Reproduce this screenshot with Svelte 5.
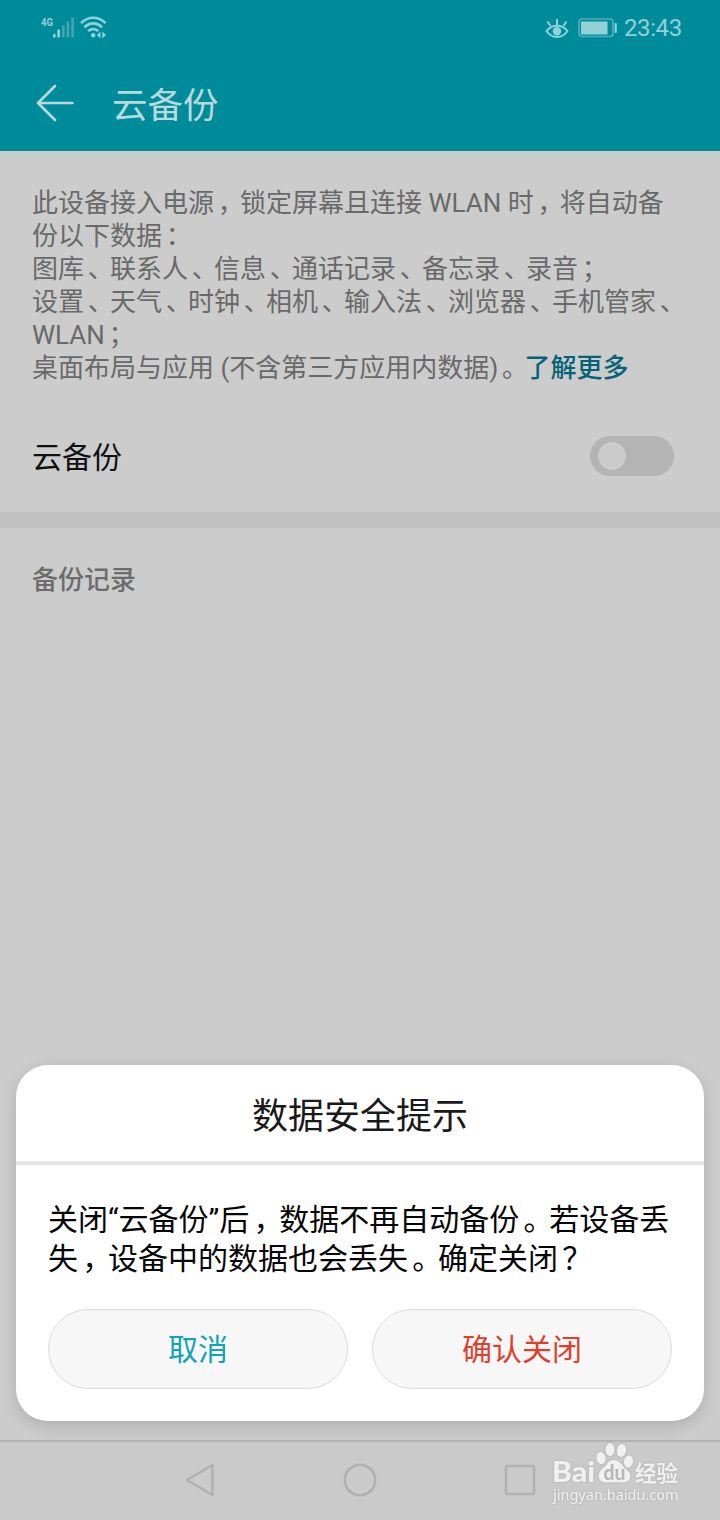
<script>
  const lines = [
    '此设备接入电源，锁定屏幕且连接 WLAN 时，将自动备',
    '份以下数据：',
    '图库、联系人、信息、通话记录、备忘录、录音；',
    '设置、天气、时钟、相机、输入法、浏览器、手机管家、',
    'WLAN；'
  ];
  const message = ['关闭“云备份”后，数据不再自动备份。若设备丢', '失，设备中的数据也会丢失。确定关闭？'];
  const parts = (text) => text.split(/([，。、；：？])/).filter(Boolean);
  const isMark = (part) => '，。、；：？'.includes(part);
  let enabled = $state(false);
</script>

{#snippet prose(text)}{#each parts(text) as part}{#if isMark(part)}<span class="punct">{part}</span>{:else}{part}{/if}{/each}{/snippet}

<div class="screen">
  <header>
    <div class="status">
      <svg class="signal" width="68" height="26" viewBox="0 0 68 26">
        <text x="1" y="11" font-size="11.500" font-weight="700" textLength="12" lengthAdjust="spacingAndGlyphs" fill="#8fd3db">4G</text>
        <g fill="#8fd3db">
          <rect x="13" y="19" width="2.6" height="3.5" />
          <rect x="17.3" y="14.5" width="2.6" height="8" />
        </g>
        <g fill="#43a7b3">
          <rect x="22" y="10.5" width="2.6" height="12" />
          <rect x="26.6" y="6.5" width="2.6" height="16" />
          <rect x="31.3" y="2.5" width="2.6" height="20" />
        </g>
        <g fill="none" stroke="#8fd3db" stroke-width="2.6">
          <path d="M41 8.2C48 1 58.500 1 65.500 8.200" />
          <path d="M44.500 12.300C49.500 7 57 7 62 12.300" />
          <path d="M48.200 16.200C51 13.300 55.500 13.300 58.300 16.200" />
        </g>
        <circle cx="53.2" cy="20.200" r="2.200" fill="#8fd3db" />
        <path d="M60.500 16.500v7L56.800 20zM62.300 16.500v7L66 20z" fill="#8fd3db" />
      </svg>
      <div class="right">
        <svg width="24" height="24" viewBox="0 0 24 24" fill="none" stroke="#8fd3db" stroke-width="2">
          <path d="M1.500 15C7 8 17 8 22.500 15C17 23 7 23 1.500 15Z" />
          <circle cx="12" cy="15.300" r="4.200" fill="#8fd3db" stroke="none" />
          <path d="M12 9V3M5.500 10L2.500 5.500M18.500 10L21.500 5.500" />
        </svg>
        <svg width="40" height="20" viewBox="0 0 40 20">
          <rect x="1" y="1" width="34" height="17.500" rx="3" fill="none" stroke="#4eafb9" stroke-width="1.700" />
          <rect x="3" y="3.500" width="26.500" height="13" fill="#93d0d7" />
          <rect x="36.600" y="5" width="2.200" height="10" rx="1" fill="#8fd3db" />
        </svg>
        <span class="time">23:43</span>
      </div>
    </div>
    <div class="bar">
      <svg width="38" height="38" viewBox="0 0 38 38" fill="none" stroke="#b8dadd" stroke-width="2.600" stroke-linecap="round" stroke-linejoin="round">
        <path d="M36.500 19H2M19 2L2 19L19 36" />
      </svg>
      <h1>云备份</h1>
    </div>
  </header>

  <main>
    <section class="intro">
      {#each lines as line}
        <div>{@render prose(line)}</div>
      {/each}
      <div>{@render prose('桌面布局与应用 (不含第三方应用内数据)。')}<b>了解更多</b></div>
    </section>
    <section class="setting">
      <span>云备份</span>
      <button class="toggle" class:on={enabled} aria-label="云备份" onclick={() => (enabled = !enabled)}><i></i></button>
    </section>
    <div class="band"></div>
    <h2>备份记录</h2>
  </main>

  <div class="dialog">
    <h3>数据安全提示</h3>
    <div class="message">
      {#each message as line}
        <div>{@render prose(line)}</div>
      {/each}
    </div>
    <div class="actions">
      <button class="cancel">取消</button>
      <button class="confirm">确认关闭</button>
    </div>
  </div>

  <nav>
    <svg width="32" height="36" viewBox="0 0 32 36"><path d="M3 18L28.500 3V33Z" /></svg>
    <svg width="36" height="36" viewBox="0 0 36 36"><circle cx="18" cy="18" r="15.200" /></svg>
    <svg width="32" height="36" viewBox="0 0 32 36"><rect x="2" y="4" width="28" height="28" rx="1.500" /></svg>
  </nav>

  <div class="mark">
    <svg width="140" height="56" viewBox="0 0 140 56">
      <g fill="#f1f1f1">
        <text class="brand" x="1" y="41" font-size="29" font-weight="900" textLength="43" lengthAdjust="spacingAndGlyphs">Bai</text>
        <ellipse cx="50" cy="17" rx="4.500" ry="6" transform="rotate(-10 50 17)" />
        <ellipse cx="59" cy="8.500" rx="4.500" ry="6.500" />
        <ellipse cx="70.500" cy="9.500" rx="4.500" ry="6.500" transform="rotate(12 70.500 9.500)" />
        <ellipse cx="77.500" cy="20.500" rx="4.500" ry="6" transform="rotate(10 77.500 20.500)" />
        <path d="M63 19C57 19 56 24 51 28C45 33 47 42 56 41.500C61 41 66 41 70 41.500C80 43 82 34 76 29C71 25 69 19 63 19Z" />
        <text class="cjk" x="84" y="39.500" font-size="22" font-weight="700" textLength="43" lengthAdjust="spacingAndGlyphs">经验</text>
      </g>
      <text class="brand" x="52.500" y="39" font-size="20" font-weight="900" textLength="22" lengthAdjust="spacingAndGlyphs" fill="#b8b8b8">du</text>
    </svg>
    <div class="url">jingyan.baidu.com</div>
  </div>
</div>

<style>
  :global(body) { margin: 0; }
  .screen {
    position: relative;
    box-sizing: border-box;
    width: 720px;
    height: 1520px;
    display: flex;
    flex-direction: column;
    overflow: hidden;
    background: #ccc;
    font-family: Roboto, "Noto Sans CJK SC", sans-serif;
  }
  header { height: 151px; background: #008b9b; }
  .status {
    height: 56px;
    display: flex;
    align-items: center;
    justify-content: space-between;
    padding: 0 38px 0 40px;
  }
  .right { display: flex; align-items: center; }
  .right svg:nth-child(2) { margin-left: 9px; }
  .time { margin-left: 6px; font-size: 24px; line-height: 56px; color: #93d0d7; width: 58px; white-space: nowrap; letter-spacing: -.4px; }
  .bar { height: 95px; display: flex; align-items: center; padding-left: 36px; }
  h1 { margin: 4px 0 0 38px; font-size: 35.500px; font-weight: 400; line-height: 48px; color: #b8dadd; }
  .bar svg { margin-top: -1px; }
  .punct { display: inline-block; width: 1em; text-indent: .14em; letter-spacing: -.15em; }
  main { flex: 1; }
  .intro { padding: 36px 0 0 32px; font-size: 26px; line-height: 33px; color: #696969; white-space: nowrap; }
  .intro div { height: 33px; }
  .intro b { font-weight: 500; color: #056379; }
  .setting {
    height: 112px;
    display: flex;
    align-items: center;
    justify-content: space-between;
    margin-top: 15px;
    padding: 0 46px 0 32px;
    font-size: 30px;
    color: #111;
  }
  .setting span { margin-top: -3px; }
  .toggle { width: 84px; height: 40px; padding: 0 8px; border: 0; border-radius: 20px; background: #b4b4b4; display: flex; align-items: center; }
  .toggle i { width: 28px; height: 28px; border-radius: 50%; background: #ccc; }
  .toggle.on { justify-content: flex-end; }
  .band { height: 16px; background: #c1c1c1; }
  h2 { margin: 34px 0 0 32px; font-size: 26px; line-height: 36px; font-weight: 500; color: #6c6c6c; }
  .dialog {
    box-sizing: border-box;
    width: 688px;
    height: 356px;
    margin: 0 16px 19px;
    border-radius: 32px;
    background: #fff;
    box-shadow: 0 5px 16px rgba(0, 0, 0, .14);
    flex: none;
  }
  h3 { height: 96px; margin: 0; border-bottom: 4px solid #e5e5e5; text-align: center; font-size: 36px; font-weight: 400; line-height: 104px; color: #1a1a1a; }
  .message { padding: 35px 0 0 32px; font-size: 30px; line-height: 39px; color: #050505; white-space: nowrap; }
  .message div { height: 39px; }
  .actions { display: flex; gap: 24px; padding: 31px 32px 0; }
  .actions button { flex: 1; height: 80px; box-sizing: border-box; padding: 0 0 4px; border: 1px solid #dcdcdc; border-radius: 40px; background: #f7f7f7; font: 30px Roboto, "Noto Sans CJK SC", sans-serif; }
  .actions .cancel { color: #12a4b4; }
  .actions .confirm { color: #df402e; }
  nav {
    box-sizing: border-box;
    height: 80px;
    border-top: 2px solid #b3b3b3;
    background: #cacaca;
    display: flex;
    align-items: center;
    gap: 126px;
    padding: 0 0 2px 184px;
  }
  nav svg { fill: none; stroke: #b0b0b0; stroke-width: 2.500; stroke-linejoin: round; }
  .mark { position: absolute; left: 551px; top: 1441px; filter: drop-shadow(0 0 1px #aaa); }
  .mark svg { display: block; margin-bottom: -12px; }
  .brand { font-family: Lato, "Liberation Sans", sans-serif; }
  .cjk { font-family: "Noto Sans CJK SC", sans-serif; }
  .url { padding-left: 2px; font: 14.500px/19px "Noto Sans", sans-serif; color: #f1f1f1; }
</style>
